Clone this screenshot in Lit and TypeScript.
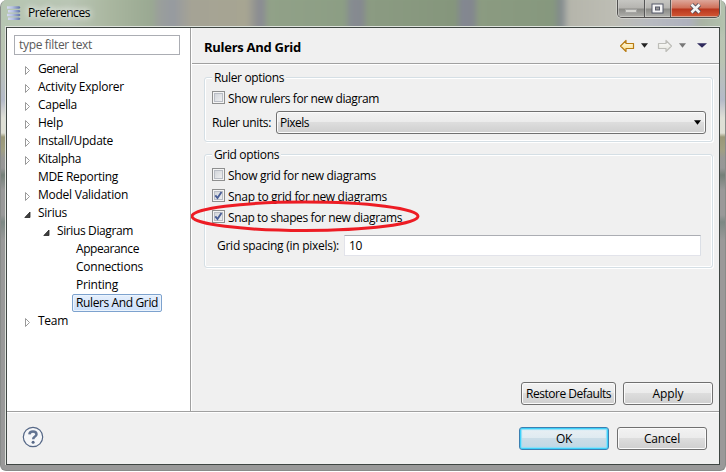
import { LitElement, html, css, svg } from "lit";
import { customElement } from "lit/decorators.js";

interface Row { label: string; width: number; depth: number; state: "closed" | "open" | "leaf"; selected?: boolean; }

const rows: Row[] = [
  { label: "General", width: 40, depth: 0, state: "closed" },
  { label: "Activity Explorer", width: 86, depth: 0, state: "closed" },
  { label: "Capella", width: 39, depth: 0, state: "closed" },
  { label: "Help", width: 25, depth: 0, state: "closed" },
  { label: "Install/Update", width: 75, depth: 0, state: "closed" },
  { label: "Kitalpha", width: 43, depth: 0, state: "closed" },
  { label: "MDE Reporting", width: 80, depth: 0, state: "leaf" },
  { label: "Model Validation", width: 90, depth: 0, state: "closed" },
  { label: "Sirius", width: 29, depth: 0, state: "open" },
  { label: "Sirius Diagram", width: 76, depth: 1, state: "open" },
  { label: "Appearance", width: 63, depth: 2, state: "leaf" },
  { label: "Connections", width: 67, depth: 2, state: "leaf" },
  { label: "Printing", width: 42, depth: 2, state: "leaf" },
  { label: "Rulers And Grid", width: 82, depth: 2, state: "leaf", selected: true },
  { label: "Team", width: 30, depth: 0, state: "closed" },
];

@customElement("fit-text")
class FitText extends LitElement {
  static properties = { text: {}, width: { type: Number } };
  declare text: string;
  declare width: number;
  static styles = css`
    :host { display: inline-block; white-space: pre; line-height: 16px; flex: none; }
  `;
  render() { return html`<span>${this.text}</span>`; }
  // Spreads the glyphs so that the label takes its nominal width.
  firstUpdated() {
    const span = this.renderRoot.querySelector("span")!;
    const natural = span.getBoundingClientRect().width;
    span.style.letterSpacing = `${(this.width - natural) / this.text.length}px`;
  }
}

const t = (text: string, width: number) => html`<fit-text .text=${text} .width=${width}></fit-text>`;

@customElement("app-root")
class AppRoot extends LitElement {
  static styles = css`
    :host { display: block; width: 726px; height: 472px; overflow: hidden; background: #fff;
      font: 12px/16px "Open Sans", "Noto Sans", sans-serif; color: #000; }
    * { box-sizing: border-box; }
    .window { position: relative; width: 726px; height: 471px; padding: 0 5px 5px 4px; border-radius: 7px 7px 6px 6px; overflow: hidden;
      border: 1px solid #888b89; border-top: 0;
      background: linear-gradient(#b7c5b3 0, #b9c4b2 60px, #b8bfbd 78px, #b4bac8 100px, #c9cbce 108px, #dedfd6 118px, #dedfd4 133px, #9a9878 137px, #a09f83 150px, #989896 158px, #979797 168px, #758079 175px, #999 190px, #999 215px, #7d8884 222px, #999 240px, #999 100%); }
    .glass { position: absolute; inset: -4px 0 auto 0; height: 36px; filter: blur(2px);
      background: linear-gradient(90deg, #b6c6b2 0, #b9c5b4 70px, #a9b69f 110px, #9aa992 150px, #9a9f9b 158px, #969aa0 172px, #a5a395 190px, #a7a592 246px, #8b8d91 257px, #8b8d93 262px, #91a188 267px, #8c9e84 343px, #868b91 350px, #85898f 361px, #8b9b82 367px, #85967c 454px, #838791 461px, #83878e 472px, #8b9b81 478px, #86987e 552px, #828a8e 560px, #b5b5ab 568px, #bdbdb4 612px, #b7bac0 650px, #aeb1bd 688px, #a9b3a3 700px, #b3c3ae 726px); }
    .title { position: relative; height: 26px; display: flex; justify-content: space-between; }
    .name { display: flex; align-items: flex-start; padding: 5px 0 0 2px; gap: 7px; }
    .name fit-text { text-shadow: 0 0 6px #fff, 0 0 9px #fff; }
    .logo { margin-top: 1px; }
    .controls { display: flex; width: 103px; height: 18px; border: 1px solid #51504f; border-top: 0; border-radius: 0 0 5px 5px; box-shadow: 0 0 0 1px #dfdfdb99; overflow: hidden; }
    .ctl { width: 27px; border-right: 1px solid #565656; box-shadow: inset 1px 0 #d4d4d099, inset 0 -1px #d8d8d499; background: linear-gradient(#c6c6c2 0, #b5b4b0 8px, #8a8a86 9px, #b0b0ac 100%); display: flex; justify-content: center; align-items: center; }
    .ctl.close { width: 48px; border: 0; background: linear-gradient(#dda79a 0, #cf7059 8px, #b8361d 9px, #d35936 100%); }
    .client { position: relative; height: 439px; border: 1px solid #dfe3dd; }
    .inner { width: 714px; height: 438px; border: 1px solid #3f4643; background: #f0f0f0; display: flex; flex-direction: column; }
    .body { height: 384px; display: flex; border-bottom: 1px solid #a0a0a0; }
    .tree { width: 184px; flex: none; background: #fff; border-right: 1px solid #a0a0a0; padding: 7px; }
    .filter { width: 166px; height: 20px; border: 1px solid #abadb3; color: #5a5a5a; display: flex; align-items: center; padding-left: 4px; }
    .rows { padding-top: 5px; }
    .row { height: 18px; display: flex; align-items: center; }
    .d0 { padding-left: 10px; } .d1 { padding-left: 29px; } .d2 { padding-left: 48px; }
    .tw { width: 10px; height: 10px; flex: none; margin-top: 1px; }
    .cell { height: 18px; padding: 0 3px; border: 1px solid transparent; border-radius: 2px; display: flex; align-items: center; }
    .cell.sel { border-color: #7da2ce; background: linear-gradient(#e5effc, #cbdffa); box-shadow: inset 0 0 0 1px #ecf4fd; }
    .page { flex: 1; min-width: 0; display: flex; flex-direction: column; border-left: 1px solid #fff; }
    .head { height: 36px; border-bottom: 1px solid #a0a0a0; display: flex; align-items: center; justify-content: space-between; padding: 3px 12px 0 12px; }
    .head fit-text { font-weight: 700; font-size: 13px; }
    .tools { display: flex; align-items: center; margin-top: -3px; }
    .content { flex: 1; border-top: 1px solid #fff; padding: 12px 6px 0 12px; display: flex; flex-direction: column; }
    .group { position: relative; border: 1px solid #d5dfe5; border-radius: 3px; box-shadow: inset 0 0 0 1px #fff, 1px 1px #fff; padding: 0 7px; width: 509px; }
    .legend { position: absolute; top: -8px; left: 7px; background: #f0f0f0; padding: 0 2px; height: 16px; display: flex; }
    .ruler { height: 65px; padding-top: 13px; }
    .grid { height: 114px; margin-top: 12px; padding-top: 13px; }
    .check { height: 13px; display: flex; align-items: center; gap: 3px; }
    .check fit-text { padding-top: 2px; }
    .grid .check { margin-bottom: 8px; }
    .box { width: 13px; height: 13px; border: 1px solid #8e8f8f; background: linear-gradient(135deg, #cbcfd5, #f6f6f6); box-shadow: inset 0 0 0 1px #f4f4f4, inset 0 0 0 2px #b9bdc5; display: flex; align-items: center; justify-content: center; }
    .units { display: flex; align-items: center; justify-content: space-between; margin-top: 7px; height: 23px; margin-right: -1px; }
    .combo, .btn { border: 1px solid #707070; border-radius: 3px; box-shadow: inset 0 0 0 1px #fbfbfb; background: linear-gradient(#f2f2f2 0, #ebebeb 48%, #dddddd 50%, #cfcfcf 100%); display: flex; align-items: center; height: 23px; }
    .combo { width: 430px; justify-content: space-between; padding: 0 4px 0 3px; }
    .spacing { display: flex; align-items: center; justify-content: space-between; padding: 0 4px 0 5px; margin-top: 12px; }
    .field { width: 357px; height: 21px; background: #fff; border: 1px solid #e2e3ea; border-top-color: #abadb3; border-right-color: #dbdfe6; display: flex; align-items: center; padding-left: 4px; }
    .btn { justify-content: center; width: 90px; }
    .btn.wide { width: 95px; }
    .btn.main { border-color: #3c7fb1; box-shadow: inset 0 0 0 1px #3ed1fa, inset 0 0 1px 2px #8edff8; background: linear-gradient(#e9f0f4 0, #dfebf1 48%, #cbdde7 50%, #c0d7e4 100%); }
    .actions { display: flex; justify-content: flex-end; gap: 7px; margin-top: auto; padding-bottom: 6px; }
    .foot { flex: 1; border-top: 1px solid #fff; display: flex; align-items: flex-start; justify-content: space-between; padding: 14px 12px 0 15px; }
    .help { margin-top: -1px; }
    .foot .pair { display: flex; gap: 8px; }
    .mark { position: absolute; left: 190px; top: 199px; pointer-events: none; }
    svg { display: block; flex: none; }
  `;

  twisty(state: Row["state"]) {
    if (state === "leaf") return html`<span class="tw"></span>`;
    return html`<svg class="tw" viewBox="0 0 10 10">${state === "closed"
      ? svg`<path d="M1.5 1.5V9.5L5.5 5.5Z" fill="#fff" stroke="#9a9a9a"/>`
      : svg`<path d="M6 3V8.5H.8Z" fill="#404040" stroke="#262626" stroke-width=".8"/>`}</svg>`;
  }

  check(label: string, width: number, on: boolean) {
    return html`<div class="check"><span class="box">${on
      ? html`<svg width="9" height="9" viewBox="0 0 9 9"><path d="M1.3 4.3 3.5 7 7.5 1" fill="none" stroke="#4a5f97" stroke-width="1.9"/></svg>` : ""}</span>${t(label, width)}</div>`;
  }

  arrow(forward: boolean) {
    const id = forward ? "forward-fill" : "back-fill";
    return html`<svg width="16" height="14" viewBox="0 0 16 14"><defs>
      <linearGradient id=${id} x2="0" y2="1"><stop stop-color=${forward ? "#fff" : "#fffdf0"}/><stop offset="1" stop-color=${forward ? "#e2e2da" : "#fbdc82"}/></linearGradient></defs>
      <path transform=${forward ? "translate(16 0) scale(-1 1)" : ""} d="M1.5 7 7 1.5V4.5H14.5V9.5H7V12.5Z" fill="url(#${id})" stroke=${forward ? "#bdbdb8" : "#b87b12"} stroke-width="1.2" stroke-linejoin="round"/></svg>`;
  }

  caret(fill: string, w = 7) {
    return html`<svg width=${w} height="5" viewBox="0 0 8 5" preserveAspectRatio="none"><path d="M0 .3H8L4 4.8Z" fill=${fill}/></svg>`;
  }

  render() {
    return html`<div class="window">
      <div class="glass"></div>
      <div class="title">
        <div class="name">
          <svg class="logo" width="14" height="14" viewBox="0 0 14 14"><defs><linearGradient id="coil"><stop stop-color="#d5daf0"/><stop offset=".4" stop-color="#b5c0e2"/><stop offset="1" stop-color="#5f72a8"/></linearGradient></defs>
            ${[0, 3.7, 7.4, 11.1].map((y, i) => svg`<path d="M${i % 2 ? 1 : 0} ${y + 0.3}H12Q14.6 ${y + 1.5} 12 ${y + 2.8}H${i % 2 ? 1 : 0}Z" fill="url(#coil)"/>`)}</svg>
          ${t("Preferences", 62)}
        </div>
        <div class="controls">
          <span class="ctl"><svg width="12" height="14"><rect x=".5" y="7.5" width="11" height="3" fill="#d5d5d0" stroke="#a5a5a3"/></svg></span>
          <span class="ctl"><svg width="13" height="13"><rect x="1" y="2" width="11" height="9" fill="#f4f4f4" stroke="#555868"/><rect x="4.5" y="5" width="4" height="3" fill="#999" stroke="#555868"/></svg></span>
          <span class="ctl close"><svg width="13" height="13" viewBox="0 0 13 13"><path d="M2.5 2.5 10.5 10.5M10.5 2.5 2.5 10.5" stroke="#514b58" stroke-width="4.4"/><path d="M2.5 2.5 10.5 10.5M10.5 2.5 2.5 10.5" stroke="#f3f3f3" stroke-width="2.6"/></svg></span>
        </div>
      </div>
      <div class="client"><div class="inner">
        <div class="body">
          <div class="tree">
            <div class="filter">${t("type filter text", 73)}</div>
            <div class="rows">${rows.map((r) => html`<div class="row d${r.depth}">${this.twisty(r.state)}<span class="cell ${r.selected ? "sel" : ""}">${t(r.label, r.width)}</span></div>`)}</div>
          </div>
          <div class="page">
            <div class="head">${t("Rulers And Grid", 97)}
              <div class="tools">${this.arrow(false)}<svg width="6" height="1"></svg>${this.caret("#222")}<svg width="9" height="1"></svg>${this.arrow(true)}<svg width="6" height="1"></svg>${this.caret("#777")}<svg width="11" height="1"></svg>${this.caret("#2e2a5c", 10)}</div>
            </div>
            <div class="content">
              <div class="group ruler"><span class="legend">${t("Ruler options", 70)}</span>
                ${this.check("Show rulers for new diagram", 151, false)}
                <div class="units">${t("Ruler units:", 59)}<div class="combo">${t("Pixels", 29)}${this.caret("#000")}</div></div>
              </div>
              <div class="group grid"><span class="legend">${t("Grid options", 65)}</span>
                ${this.check("Show grid for new diagrams", 148, false)}
                ${this.check("Snap to grid for new diagrams", 159, true)}
                ${this.check("Snap to shapes for new diagrams", 174, true)}
                <div class="spacing">${t("Grid spacing (in pixels):", 122)}<div class="field">${t("10", 13)}</div></div>
              </div>
              <div class="actions"><div class="btn wide">${t("Restore Defaults", 85)}</div><div class="btn">${t("Apply", 31)}</div></div>
            </div>
          </div>
        </div>
        <div class="foot">
          <svg class="help" width="22" height="22" viewBox="0 0 22 22"><circle cx="11" cy="11" r="9.7" fill="#f5f6f8" stroke="#566887" stroke-width="1.2"/><path d="M7.4 8.3Q7.6 5.4 11 5.4T14.5 8.2Q14.5 9.7 12.7 10.8 11.2 11.7 11.2 13.3" fill="none" stroke="#627391" stroke-width="2.5"/><circle cx="11.1" cy="16.2" r="1.5" fill="#566887"/></svg>
          <div class="pair"><div class="btn main">${t("OK", 16)}</div><div class="btn">${t("Cancel", 36)}</div></div>
        </div>
      </div></div>
      <svg class="mark" width="230" height="34" viewBox="0 0 230 34"><ellipse cx="114" cy="17.3" rx="113" ry="14.2" fill="none" stroke="#ed1c24" stroke-width="3"/></svg>
    </div>`;
  }
}
